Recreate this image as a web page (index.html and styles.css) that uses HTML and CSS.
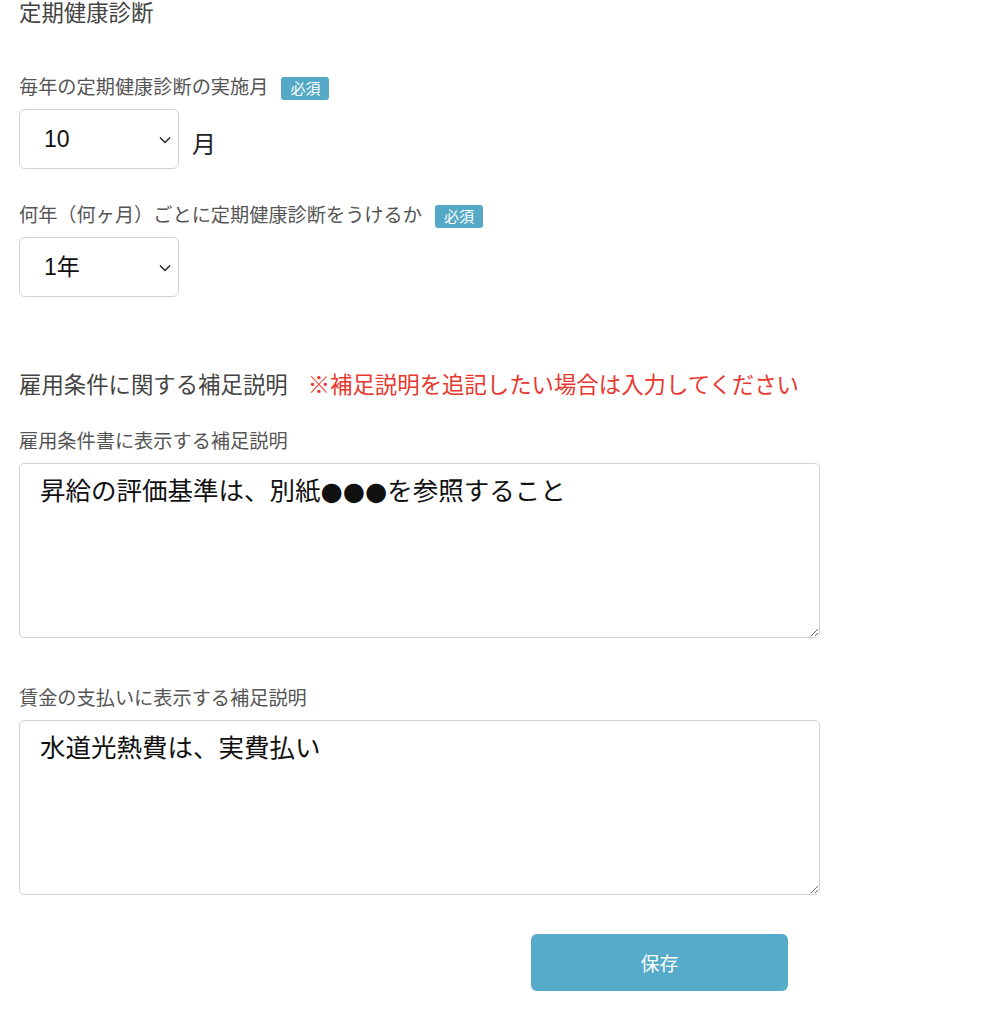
FILE: index.html
```html
<!DOCTYPE html>
<html lang="ja">
<head>
<meta charset="utf-8">
<title>定期健康診断</title>
<link rel="stylesheet" href="styles.css">
</head>
<body>
<main class="page">
  <h2 class="section-title">定期健康診断</h2>

  <div class="field field-first">
    <div class="label-row">
      <span class="label">毎年の定期健康診断の実施月</span>
      <span class="badge">必須</span>
    </div>
    <div class="select-row">
      <span class="select-wrap">
        <select class="select">
          <option>10</option>
        </select>
        <svg class="chevron" viewBox="0 0 12 8" width="12" height="8"><path d="M1 1.5 L6 6.5 L11 1.5" fill="none" stroke="#222" stroke-width="1.4"/></svg>
      </span>
      <span class="unit">月</span>
    </div>
  </div>

  <div class="field field-second">
    <div class="label-row">
      <span class="label">何年（何ヶ月）ごとに定期健康診断をうけるか</span>
      <span class="badge">必須</span>
    </div>
    <div class="select-row">
      <span class="select-wrap">
        <select class="select">
          <option>1年</option>
        </select>
        <svg class="chevron" viewBox="0 0 12 8" width="12" height="8"><path d="M1 1.5 L6 6.5 L11 1.5" fill="none" stroke="#222" stroke-width="1.4"/></svg>
      </span>
    </div>
  </div>

  <h2 class="section-title section-notes">雇用条件に関する補足説明<span class="note">※補足説明を追記したい場合は入力してください</span></h2>

  <div class="field field-ta1">
    <div class="label-row"><span class="label">雇用条件書に表示する補足説明</span></div>
    <textarea class="textarea">昇給の評価基準は、別紙●●●を参照すること</textarea>
  </div>

  <div class="field field-ta2">
    <div class="label-row"><span class="label">賃金の支払いに表示する補足説明</span></div>
    <textarea class="textarea">水道光熱費は、実費払い</textarea>
  </div>

  <div class="actions">
    <button class="save" type="button">保存</button>
  </div>
</main>
</body>
</html>
```

FILE: styles.css
```css
html, body {
  margin: 0;
  padding: 0;
  background: #fff;
}
body {
  font-family: "Liberation Sans", "Noto Sans CJK JP", sans-serif;
  color: #555;
}
.page {
  padding: 0 19px;
  display: flex;
  flex-direction: column;
}
.section-title {
  margin: 0;
  font-size: 22.4px;
  line-height: 28px;
  font-weight: 400;
  color: #444;
}
.section-notes {
  margin-top: 75px;
}
.note {
  color: #e8382f;
  margin-left: 20px;
}
.field {
  display: flex;
  flex-direction: column;
}
.field-first { margin-top: 48px; }
.field-second { margin-top: 35px; }
.field-ta1 { margin-top: 30px; }
.field-ta2 { margin-top: 49px; }
.label-row {
  display: flex;
  align-items: center;
  height: 24px;
  margin-bottom: 9px;
}
.label {
  font-size: 19.2px;
  line-height: 24px;
  color: #555;
}
.badge {
  margin-left: 13px;
  background: #55a9c6;
  color: #fff;
  font-size: 15px;
  line-height: 23px;
  height: 23px;
  padding: 0 9px;
  border-radius: 3px;
}
.select-row {
  display: flex;
  align-items: center;
}
.select-wrap {
  position: relative;
  display: inline-block;
  width: 160px;
  height: 60px;
}
.select {
  appearance: none;
  -webkit-appearance: none;
  width: 160px;
  height: 60px;
  box-sizing: border-box;
  border: 1px solid #cfd3d8;
  border-radius: 6px;
  background: #fff;
  padding: 0 0 0 24px;
  font-family: "Liberation Sans", "Noto Sans CJK JP", sans-serif;
  font-size: 23px;
  color: #111;
}
.chevron {
  position: absolute;
  right: 8px;
  top: 27px;
  pointer-events: none;
}
.unit {
  margin-left: 13px;
  font-size: 24px;
  color: #222;
  padding-top: 6px;
}
.textarea {
  box-sizing: border-box;
  width: 801px;
  height: 175px;
  border: 1px solid #cfd3d8;
  border-radius: 5px;
  padding: 10px 20px;
  font-family: "DejaVu Sans", "Noto Sans CJK JP", sans-serif;
  font-size: 25.5px;
  line-height: 1.4;
  color: #111;
  resize: vertical;
}
.actions {
  margin-top: 39px;
  padding-left: 512px;
}
.save {
  width: 257px;
  height: 57px;
  border: none;
  border-radius: 6px;
  background: #55abc8;
  color: #fff;
  font-family: "Liberation Sans", "Noto Sans CJK JP", sans-serif;
  font-size: 19px;
}
```
